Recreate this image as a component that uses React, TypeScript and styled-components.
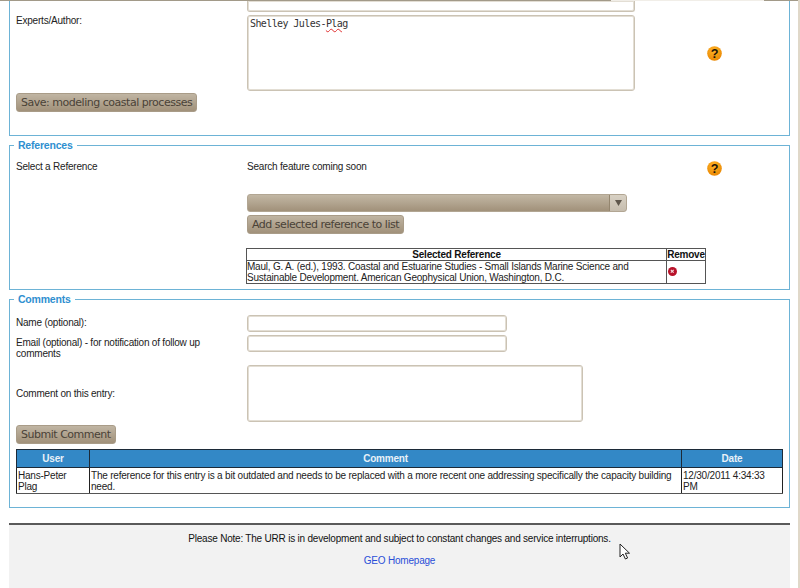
import React from 'react'
import styled, { createGlobalStyle } from 'styled-components'

const GlobalStyle = createGlobalStyle`
  html, body {
    margin: 0;
    padding: 0;
    background: #fff;
  }
  body {
    font-family: "Liberation Sans", Arial, sans-serif;
    font-size: 10px;
    letter-spacing: -0.21px;
    color: #222;
  }
`

const HelpIcon = () => (
  <HelpSvg viewBox="0 0 16 16">
    <defs>
      <radialGradient id="helpFill" cx="45%" cy="30%" r="75%">
        <stop offset="0%" stopColor="#ffb426" />
        <stop offset="100%" stopColor="#e88400" />
      </radialGradient>
    </defs>
    <circle cx="8" cy="8" r="7.8" fill="url(#helpFill)" />
    <text x="8" y="12.700" textAnchor="middle" fontSize="13.500" fontWeight="700" fontFamily="Liberation Sans" fill="#1c1408">?</text>
  </HelpSvg>
)

const RemoveIcon = () => (
  <svg width="9" height="9" viewBox="0 0 9 9">
    <circle cx="4.5" cy="4.5" r="4.5" fill="#b8122a" />
    <path d="M2.8 2.8l2.9 2.9M5.7 2.8L2.8 5.7" stroke="#f3d5d8" strokeWidth="1.2" />
  </svg>
)

const App: React.FC = () => {
  return (
    <Page>
      <GlobalStyle />
      <TopEdge />
      <Content>
        <OpenPanel>
          <ClippedInput />
          <FormRow>
            <Label>Experts/Author:</Label>
            <AuthorBox>
              Shelley Jules-<Misspelled>Plag</Misspelled>
            </AuthorBox>
            <HelpSlot top={31}>
              <HelpIcon />
            </HelpSlot>
          </FormRow>
          <Button>Save: modeling coastal processes</Button>
        </OpenPanel>

        <Panel>
          <PanelTitle>References</PanelTitle>
          <FormRow>
            <Label>Select a Reference</Label>
            <Label>Search feature coming soon</Label>
            <HelpSlot top={0}>
              <HelpIcon />
            </HelpSlot>
          </FormRow>
          <Indented>
            <SelectBox>
              <SelectArrow>
                <svg width="7" height="6" viewBox="0 0 7 6">
                  <path d="M0 0h7L3.5 6z" fill="#5f574c" />
                </svg>
              </SelectArrow>
            </SelectBox>
            <Button>Add selected reference to list</Button>
            <RefTable>
              <colgroup>
                <col width="420" />
                <col width="39" />
              </colgroup>
              <thead>
                <tr>
                  <RefHead>Selected Reference</RefHead>
                  <RefHead>Remove</RefHead>
                </tr>
              </thead>
              <tbody>
                <tr>
                  <RefCell>
                    Maul, G. A. (ed.), 1993. Coastal and Estuarine Studies - Small Islands Marine Science and
                    Sustainable Development. American Geophysical Union, Washington, D.C.
                  </RefCell>
                  <RemoveCell>
                    <RemoveIcon />
                  </RemoveCell>
                </tr>
              </tbody>
            </RefTable>
          </Indented>
        </Panel>

        <CommentsPanel>
          <PanelTitle>Comments</PanelTitle>
          <CommentRow>
            <CommentLabel>Name (optional):</CommentLabel>
            <ShortInput />
          </CommentRow>
          <CommentRow>
            <CommentLabel>Email (optional) - for notification of follow up comments</CommentLabel>
            <ShortInput />
          </CommentRow>
          <CommentArea>
            <AreaLabel>Comment on this entry:</AreaLabel>
            <BigArea />
          </CommentArea>
          <Button>Submit Comment</Button>
          <CommentTable>
            <colgroup>
              <col width="73" />
              <col width="592" />
              <col width="101" />
            </colgroup>
            <thead>
              <tr>
                <CommentHead>User</CommentHead>
                <CommentHead>Comment</CommentHead>
                <CommentHead>Date</CommentHead>
              </tr>
            </thead>
            <tbody>
              <tr>
                <CommentCell>Hans-Peter Plag</CommentCell>
                <CommentCell>
                  The reference for this entry is a bit outdated and needs to be replaced with a more recent one
                  addressing specifically the capacity building need.
                </CommentCell>
                <CommentCell>12/30/2011 4:34:33 PM</CommentCell>
              </tr>
            </tbody>
          </CommentTable>
        </CommentsPanel>

        <Footer>
          <FooterNote>Please Note: The URR is in development and subject to constant changes and service interruptions.</FooterNote>
          <FooterLink href="#">GEO Homepage</FooterLink>
          <Cursor viewBox="0 0 12 17">
            <path d="M1 1v13l3-3 2.4 5 2.2-1-2.3-4.8H10.500z" fill="#fff" stroke="#222" strokeWidth="1" />
          </Cursor>
        </Footer>
      </Content>
    </Page>
  )
}

export default App

const Page = styled.div`
  width: 800px;
  height: 588px;
  overflow: hidden;
  box-sizing: border-box;
  border-right: 2px solid #e0d8c9;
`

const TopEdge = styled.div`
  height: 1px;
  background: linear-gradient(to right, #a29a89 611px, #f1eee8 611px, #f1eee8 764px, #a29a89 764px);
`

const Content = styled.div`
  width: 781px;
  margin-left: 9px;
`

const OpenPanel = styled.div`
  height: 135px;
  box-sizing: border-box;
  border: 1px solid #6db3d6;
  border-top: none;
  padding-left: 6px;
  margin-bottom: 3px;
`

const Panel = styled.fieldset`
  margin: 0 0 3px;
  height: 151px;
  box-sizing: border-box;
  border: 1px solid #6db3d6;
  padding: 9px 6px 0;
  min-width: 0;
`

const CommentsPanel = styled(Panel)`
  height: 215px;
  margin-bottom: 15px;
  padding-top: 9px;
`

const PanelTitle = styled.legend`
  margin-left: -2px;
  padding: 0 4px;
  color: #2f8fd0;
  font-size: 10.5px;
  font-weight: 700;
  line-height: 13px;
`

const FormRow = styled.div`
  position: relative;
  display: grid;
  grid-template-columns: 231px 1fr;
  margin-bottom: 2px;
`

const CommentRow = styled.div`
  display: grid;
  grid-template-columns: 231px 1fr;
  margin-bottom: 3px;
  line-height: 11px;
`

const CommentArea = styled.div`
  display: grid;
  grid-template-columns: 231px 1fr;
  align-items: center;
  margin-top: 6px;
  margin-bottom: 3px;
`

const Label = styled.div`
  padding-right: 20px;
  line-height: 11px;
`

const CommentLabel = styled(Label)`
  padding-top: 2px;
`

const AreaLabel = styled(Label)`
  padding-bottom: 1px;
`

const fieldBorder = `
  border: 1px solid #cbc3b4;
  box-shadow: inset 0 0 0 1px #e3ded4;
  background: #fff;
  border-radius: 3px;
  box-sizing: border-box;
`

const ClippedInput = styled.div`
  ${fieldBorder}
  border-top: none;
  border-top-left-radius: 0;
  border-top-right-radius: 0;
  width: 388px;
  height: 11px;
  margin-left: 231px;
  margin-bottom: 3px;
`

const AuthorBox = styled.div`
  ${fieldBorder}
  width: 388px;
  height: 76px;
  padding: 2px;
  font-family: "DejaVu Sans Mono", monospace;
  font-size: 10px;
  letter-spacing: -0.6px;
  line-height: 11px;
  color: #333;
`

const Misspelled = styled.span`
  text-decoration: underline wavy #e03030 1px;
`

const HelpSlot = styled.div<{ top: number }>`
  position: absolute;
  left: 691px;
  top: ${({ top }) => top}px;
`

const HelpSvg = styled.svg`
  display: block;
  width: 15px;
  height: 15px;
`

const Button = styled.button`
  display: block;
  height: 19px;
  padding: 0 4px;
  border: 1px solid #a99c88;
  border-radius: 3px;
  background: linear-gradient(#c0b5a3, #a1917a);
  color: #4a4237;
  font-family: "DejaVu Sans", sans-serif;
  font-size: 11px;
  letter-spacing: -0.48px;
  line-height: 15px;
`

const Indented = styled.div`
  margin-left: 231px;
  margin-top: 22px;
`

const SelectBox = styled.div`
  display: flex;
  justify-content: flex-end;
  width: 380px;
  height: 18px;
  box-sizing: border-box;
  border: 1px solid #b2a693;
  border-radius: 3px;
  background: linear-gradient(#c2b7a4, #a1917a);
  margin-bottom: 3px;
`

const SelectArrow = styled.div`
  display: flex;
  align-items: center;
  justify-content: center;
  width: 16px;
  border-left: 1px solid #94866f;
  background: linear-gradient(#d8d1c4, #c6bdae);
  border-radius: 0 2px 2px 0;
`

const RefTable = styled.table`
  width: 460px;
  margin: 14px 0 0 -1px;
  table-layout: fixed;
  border-collapse: collapse;
  border: 1px solid #444;
  line-height: 11px;
`

const RefHead = styled.th`
  border: 1px solid #555;
  padding: 0;
  height: 11px;
  color: #111;
`

const RefCell = styled.td`
  border: 1px solid #555;
  padding: 0;
  color: #222;
`

const RemoveCell = styled(RefCell)`
  padding-left: 1px;
`

const ShortInput = styled.input`
  ${fieldBorder}
  width: 260px;
  height: 17px;
  display: block;
`

const BigArea = styled.textarea`
  ${fieldBorder}
  width: 336px;
  height: 57px;
  display: block;
  resize: none;
`

const CommentTable = styled.table`
  width: 767px;
  margin-top: 5px;
  table-layout: fixed;
  border-collapse: collapse;
  border: 1px solid #222;
  border-bottom-color: #555;
`

const CommentHead = styled.th`
  height: 17px;
  padding: 0;
  background: #3388c6;
  border: 1px solid #1c2a38;
  color: #e8f1f8;
`

const CommentCell = styled.td`
  padding: 2px 2px 1px 1px;
  border: 1px solid #222;
  border-bottom-color: #555;
  line-height: 11px;
  vertical-align: top;
`

const Footer = styled.div`
  position: relative;
  height: 65px;
  border-top: 2px solid #5a5a5a;
  background: #f2f2f2;
  text-align: center;
  color: #111;
`

const FooterNote = styled.div`
  padding-top: 8px;
  line-height: 11px;
`

const FooterLink = styled.a`
  display: block;
  margin-top: 11px;
  line-height: 11px;
  color: #2a4fd8;
  text-decoration: none;
`

const Cursor = styled.svg`
  position: absolute;
  left: 610px;
  top: 18px;
  width: 12px;
  height: 17px;
`
